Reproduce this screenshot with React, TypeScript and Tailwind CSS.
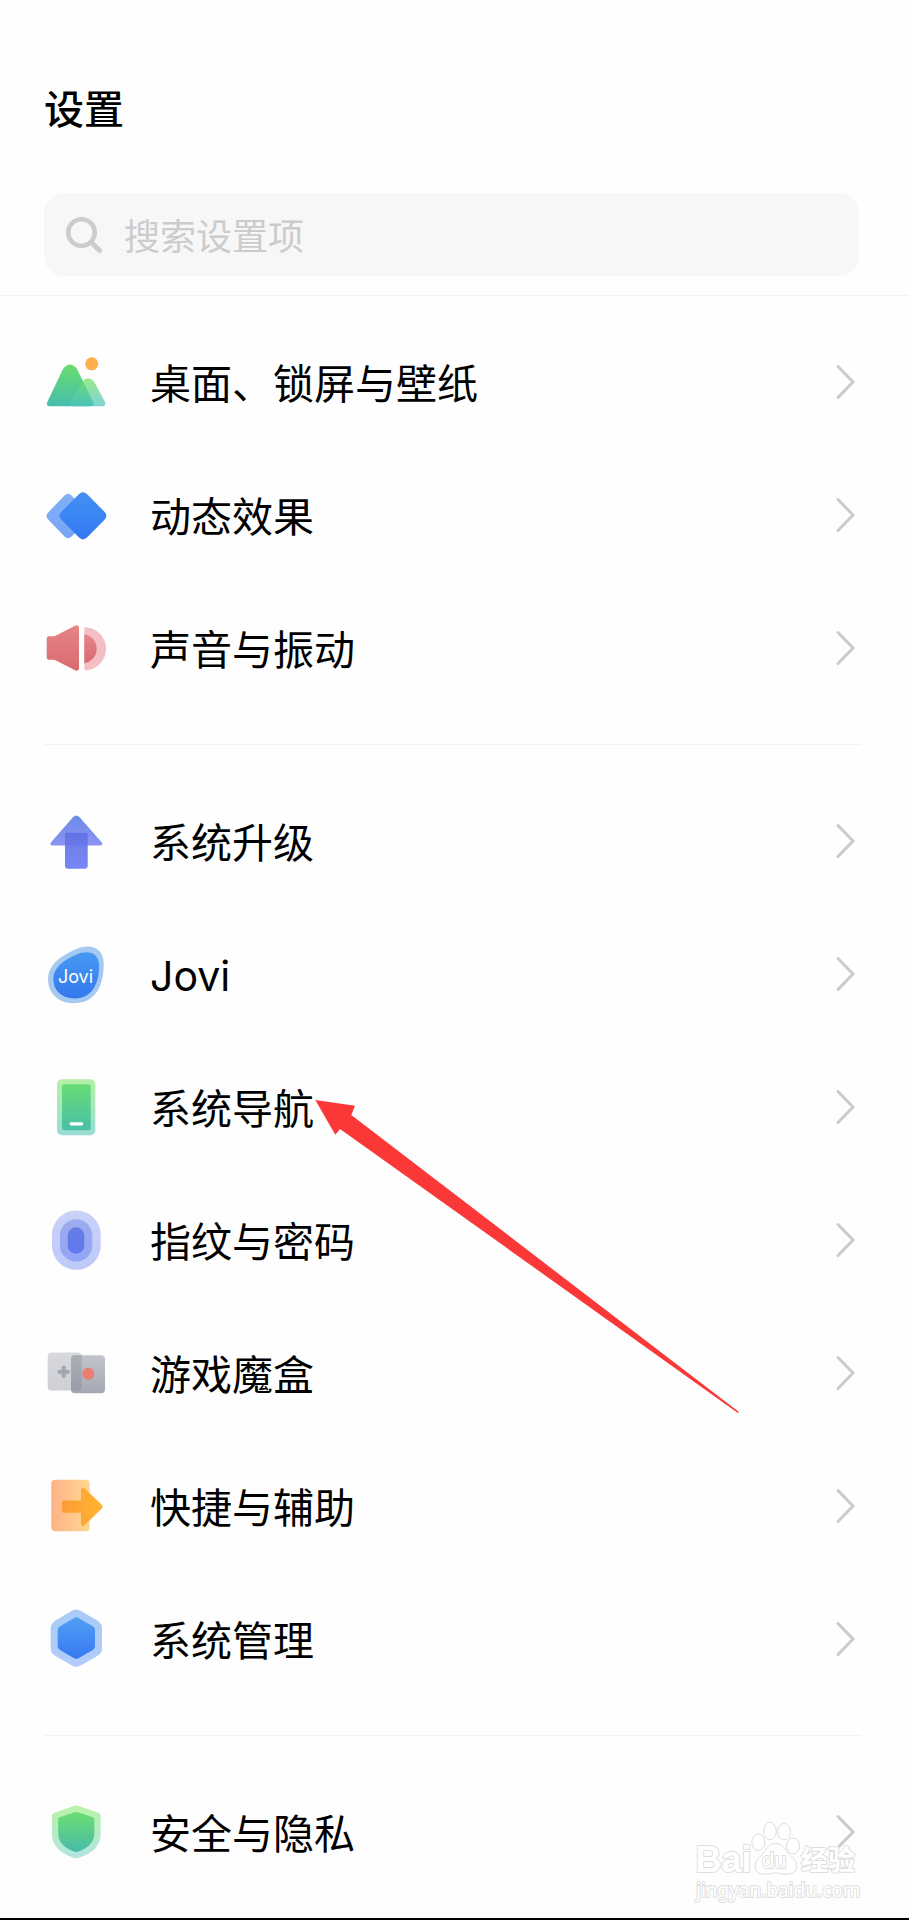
import type { ReactNode } from "react";

type Point = [number, number];

/** Builds a closed path through the points with each corner rounded off. */
function rounded(points: Point[], radius: number): string {
  const n = points.length;
  const parts = points.map((p, i) => {
    const a = points[(i + n - 1) % n];
    const b = points[(i + 1) % n];
    const toward = (q: Point): Point => {
      const len = Math.hypot(q[0] - p[0], q[1] - p[1]);
      const t = Math.min(radius, len / 2) / len;
      return [p[0] + (q[0] - p[0]) * t, p[1] + (q[1] - p[1]) * t];
    };
    const s = toward(a);
    const e = toward(b);
    return `${i === 0 ? "M" : "L"}${s[0]} ${s[1]}Q${p[0]} ${p[1]} ${e[0]} ${e[1]}`;
  });
  return parts.join("") + "Z";
}

function Gradient({ id, from, to, horizontal }: { id: string; from: string; to: string; horizontal?: boolean }) {
  return (
    <linearGradient id={id} x1="0" y1="0" x2={horizontal ? "1" : "0"} y2={horizontal ? "0" : "1"}>
      <stop offset="0" stopColor={from} />
      <stop offset="1" stopColor={to} />
    </linearGradient>
  );
}

function Icon({ children }: { children: ReactNode }) {
  return (
    <svg viewBox="0 0 64 64" className="size-16 shrink-0" aria-hidden="true">
      {children}
    </svg>
  );
}

const WallpaperIcon = () => (
  <Icon>
    <Gradient id="wp-a" from="#69dc6c" to="#45bfae" />
    <Gradient id="wp-b" from="#6fe35f" to="#4fc3c4" />
    <circle cx="47.7" cy="13.8" r="6.5" fill="#ffb04a" />
    <path d="M19 19Q26 10 33 19L49 51.500Q51 56 46.500 56.200H5.500Q1.500 56 3.500 51.500Z" fill="url(#wp-a)" />
    <path d="M38.5 31.500Q44.300 25 50 31.500L61 52Q62.500 56 58.500 56.200H28Q24.500 56 26.500 52Z" fill="url(#wp-b)" opacity="0.72" />
  </Icon>
);

const MotionIcon = () => (
  <Icon>
    <Gradient id="mo-a" from="#80b0f6" to="#78a4f8" />
    <Gradient id="mo-b" from="#4291f1" to="#3478f5" />
    <path d={rounded([[24, 9], [48, 33], [24, 57], [0.7, 33]], 5)} fill="url(#mo-a)" />
    <path d={rounded([[39, 7], [64.5, 32.8], [39, 58.6], [13.5, 32.8]], 6)} fill="url(#mo-b)" />
  </Icon>
);

const SoundIcon = () => (
  <Icon>
    <Gradient id="so-a" from="#e58587" to="#da6a70" />
    <path
      d="M5 20.200H9Q11 20.200 13 19L31.500 9.600Q35 8.500 35 12V52Q35 55.500 31.500 54.500L13 45Q11 43.800 9 43.800H5Q2.700 43.800 2.700 41.500V22.500Q2.700 20.200 5 20.200Z"
      fill="url(#so-a)"
    />
    <path d="M40.300 12.500Q40.300 11.200 42 11.300A21.500 21.500 0 0 1 42 54.200Q40.300 54.300 40.300 53Z" fill="#f3bfc2" />
    <path d="M40.300 18.500A14.500 14.500 0 0 1 40.300 47.200Z" fill="url(#so-a)" />
  </Icon>
);

const UpgradeIcon = () => (
  <Icon>
    <Gradient id="up-a" from="#6b8be8" to="#8b93f2" />
    <Gradient id="up-b" from="#6170e4" to="#6b7df5" />
    <path d={rounded([[32.3, 4.5], [60.5, 36.5], [4.2, 36.5]], 5)} fill="url(#up-a)" />
    <path d="M21 23.800H43.700V56.800Q43.700 59.800 40.700 59.800H24Q21 59.800 21 56.800Z" fill="url(#up-b)" opacity="0.92" />
  </Icon>
);

const JoviIcon = () => (
  <Icon>
    <Gradient id="jo-a" from="#479af3" to="#3378ee" />
    <path d="M43 4.500C53 4.500 59.700 10 59.700 22C59.700 46 50 61.200 30 61.200C14 61.200 4 51 4 37C4 26 12 18 20 13.500C28 8.500 36 4.500 43 4.500Z" fill="#a6c9f1" />
    <path d="M42 10.200C50 10.200 55 14.500 55 24C55 44 46.500 56.500 30.500 56.500C17.500 56.500 9.300 48 9.300 37C9.300 28.500 15.500 22 22.500 17.800C29 13.700 36 10.200 42 10.200Z" fill="url(#jo-a)" />
    <text x="31.5" y="41" textAnchor="middle" fill="#fff" fontFamily="Inter, sans-serif" fontSize="18" fontWeight="400">
      Jovi
    </text>
  </Icon>
);

const NavigationIcon = () => (
  <Icon>
    <Gradient id="na-a" from="#b3f0a4" to="#98dcd4" />
    <Gradient id="na-b" from="#68db75" to="#49c0a6" />
    <rect x="13" y="4.200" width="38.300" height="56" rx="5" fill="url(#na-a)" />
    <rect x="18" y="9.200" width="28.700" height="46" rx="2.500" fill="url(#na-b)" />
    <rect x="25.700" y="47.200" width="13.300" height="3.200" rx="1.200" fill="#fff" />
  </Icon>
);

const FingerprintIcon = () => (
  <Icon>
    <Gradient id="fi-a" from="#c8d2f6" to="#bfc9fb" />
    <Gradient id="fi-b" from="#9dacee" to="#93a4f7" />
    <Gradient id="fi-c" from="#647de5" to="#5f79f2" />
    <rect x="8" y="2.500" width="48.700" height="59.300" rx="24.300" fill="url(#fi-a)" />
    <rect x="16" y="11.200" width="32.300" height="42.300" rx="16" fill="url(#fi-b)" />
    <rect x="23.700" y="19.200" width="16.600" height="26.600" rx="8.300" fill="url(#fi-c)" />
  </Icon>
);

const GameIcon = () => (
  <Icon>
    <Gradient id="ga-a" from="#d8d9dd" to="#cfd0d6" />
    <Gradient id="ga-b" from="#c2c4cc" to="#a5a7b2" />
    <Gradient id="ga-c" from="#abadb6" to="#9a9ca8" />
    <rect x="3.700" y="11.500" width="34" height="38" rx="4" fill="url(#ga-a)" />
    <rect x="27" y="14.200" width="34" height="38" rx="4" fill="url(#ga-b)" />
    <path d="M31 14.200H37.700V45.500Q37.700 49.500 33.700 49.500H27V18.200Q27 14.200 31 14.200Z" fill="url(#ga-c)" />
    <path d="M19.700 26.500V35M15.500 30.800H24" stroke="#a4a6b1" strokeWidth="4.200" strokeLinecap="round" />
    <circle cx="44.300" cy="32.800" r="6" fill="#ec7c6f" />
  </Icon>
);

const ShortcutIcon = () => (
  <Icon>
    <Gradient id="sh-a" from="#ffb287" to="#ffd88f" horizontal />
    <Gradient id="sh-b" from="#ff9b38" to="#ffb42f" horizontal />
    <rect x="7.300" y="5.800" width="38.400" height="51.400" rx="4" fill="url(#sh-a)" />
    <path
      d="M19.500 26.500H37V15.500Q37.500 12 40.500 14.200L57.500 30.500Q59.800 32.600 57.500 34.800L40.500 51.200Q37.500 53.500 37 49.800V38.800H19.500Q18 38.800 18 37.300V28Q18 26.500 19.500 26.500Z"
      fill="url(#sh-b)"
    />
  </Icon>
);

const SystemIcon = () => (
  <Icon>
    <Gradient id="sy-a" from="#a9cbf6" to="#b2cdfb" />
    <Gradient id="sy-b" from="#50a0f5" to="#3878f2" />
    <path d={rounded([[32.3, 1.2], [58, 16.2], [58, 46.2], [32.3, 61], [6.7, 46.2], [6.7, 16.2]], 5)} fill="url(#sy-a)" />
    <path d={rounded([[32.3, 9.7], [51, 20.5], [51, 41.7], [32.3, 52.5], [13.7, 41.7], [13.7, 20.5]], 2.5)} fill="url(#sy-b)" />
  </Icon>
);

const SecurityIcon = () => (
  <Icon>
    <Gradient id="se-a" from="#b9f2a8" to="#b4e5e2" />
    <Gradient id="se-b" from="#6cde70" to="#48bcaa" />
    <path d="M30.500 5.700Q32.300 4.700 34.100 5.700L55 13Q56.700 13.800 56.700 15.500V34Q56.700 51 34.300 58Q32.300 58.800 30.300 58Q8 51 8 34V15.500Q8 13.800 9.700 13Z" fill="url(#se-a)" />
    <path d="M32.300 11.800L49 17.300Q50.300 17.800 50.300 19V33.500Q50.300 46.500 32.300 52.200Q14.200 46.500 14.200 33.500V19Q14.200 17.800 15.500 17.300Z" fill="url(#se-b)" />
  </Icon>
);

function Chevron() {
  return (
    <svg viewBox="0 0 24 40" className="h-10 w-6 shrink-0" fill="none" stroke="#cbcbcb" strokeWidth="3" strokeLinecap="round" aria-hidden="true">
      <path d="M3 4.500L18 20L3 35.500" />
    </svg>
  );
}

/** Red pointer drawn over the list, its tip at the end of the row's label. */
function Pointer() {
  return (
    <svg viewBox="0 0 460 350" className="pointer-events-none absolute top-10 left-75 z-10 h-[350px] w-[460px]" aria-hidden="true">
      <path d="M15.300 20L55 25.700L51.300 35L439.300 332.300L437.500 332.700L40 49L35.300 54.700Z" fill="#fb3838" />
    </svg>
  );
}

function Watermark() {
  const outline = { fill: "#fff", stroke: "#dfdfdf", strokeWidth: 2, paintOrder: "stroke" as const };
  return (
    <svg viewBox="0 0 168 84" className="pointer-events-none absolute right-[47px] bottom-[14px] h-[84px] w-[168px]" fontFamily="'Liberation Sans', 'Noto Sans CJK SC', sans-serif">
      <g fill="#fff" stroke="#dcdcdc" strokeWidth="1">
        <ellipse cx="64.300" cy="22.300" rx="6.500" ry="8.200" />
        <ellipse cx="76" cy="11" rx="6.200" ry="8.700" />
        <ellipse cx="90" cy="11.700" rx="6.500" ry="8.200" />
        <ellipse cx="99" cy="26" rx="6.500" ry="7.800" />
        <path d="M81.500 23.500C88 23.500 90 28 94 33C98 37.500 102.700 40.500 102.700 46C102.700 51.500 98 54.300 93 54.300C88 54.300 86 53 81.500 53C77 53 75 54.300 70 54.300C65 54.300 61 51.500 61 46C61 40.500 66 37.500 69.500 33C73 28 75 23.500 81.500 23.500Z" />
      </g>
      <text x="1.500" y="52" fontSize="36" fontWeight="700" {...outline}>Bai</text>
      <text x="68" y="48" fontSize="22" fontWeight="400" {...outline}>du</text>
      <text x="107" y="50" fontSize="27" fontWeight="700" {...outline}>经验</text>
      <text x="2" y="77" fontSize="19" fontFamily="'Noto Sans', sans-serif" {...outline}>jingyan.baidu.com</text>
    </svg>
  );
}

type Item = { label: string; icon: () => ReactNode; pointed?: boolean };

const groups: Item[][] = [
  [
    { label: "桌面、锁屏与壁纸", icon: WallpaperIcon },
    { label: "动态效果", icon: MotionIcon },
    { label: "声音与振动", icon: SoundIcon },
  ],
  [
    { label: "系统升级", icon: UpgradeIcon },
    { label: "Jovi", icon: JoviIcon },
    { label: "系统导航", icon: NavigationIcon, pointed: true },
    { label: "指纹与密码", icon: FingerprintIcon },
    { label: "游戏魔盒", icon: GameIcon },
    { label: "快捷与辅助", icon: ShortcutIcon },
    { label: "系统管理", icon: SystemIcon },
  ],
  [{ label: "安全与隐私", icon: SecurityIcon }],
];

function Row({ label, icon: ItemIcon, pointed }: Item) {
  return (
    <li className="relative">
      <a href="#" className="flex h-[133px] items-center pr-[50px] pl-11">
        <ItemIcon />
        <span className="ml-[42px] flex-1 pt-1 text-[41px] leading-[60px]">{label}</span>
        <Chevron />
      </a>
      {pointed && <Pointer />}
    </li>
  );
}

export default function App() {
  return (
    <div className="relative overflow-hidden border-b-2 border-black bg-[#fefefe] font-[Inter,'Noto_Sans_CJK_SC',sans-serif] text-black">
      <header className="border-b border-[#f3f3f3] pt-20 pr-[50px] pb-[19px] pl-11">
        <h1 className="text-[40px] leading-[60px] font-medium">设置</h1>
        <label className="mt-[53px] flex h-[83px] items-center rounded-[20px] bg-[#f7f7f7] pr-6 pl-5">
          <svg viewBox="0 0 40 40" className="size-10 shrink-0" fill="none" stroke="#cccccc" strokeLinecap="round" aria-hidden="true">
            <circle cx="17.500" cy="17.500" r="13.200" strokeWidth="4.600" />
            <path d="M27.500 27.500L35.500 35.500" strokeWidth="5" />
          </svg>
          <input
            type="search"
            aria-label="搜索设置项"
            placeholder="搜索设置项"
            className="ml-5 min-w-0 flex-1 bg-transparent pt-1 text-[36px] leading-[54px] outline-none placeholder:text-[#cccccc]"
          />
        </label>
      </header>
      <main>
        <div className="pt-[19px] pb-5">
          {groups.map((items, index) => (
            <section key={index}>
              {index > 0 && <hr className="mt-[30px] mr-12 mb-[29px] ml-11 border-t border-[#f3f3f3]" />}
              <ul>
                {items.map((item) => (
                  <Row key={item.label} {...item} />
                ))}
              </ul>
            </section>
          ))}
        </div>
      </main>
      <Watermark />
    </div>
  );
}
